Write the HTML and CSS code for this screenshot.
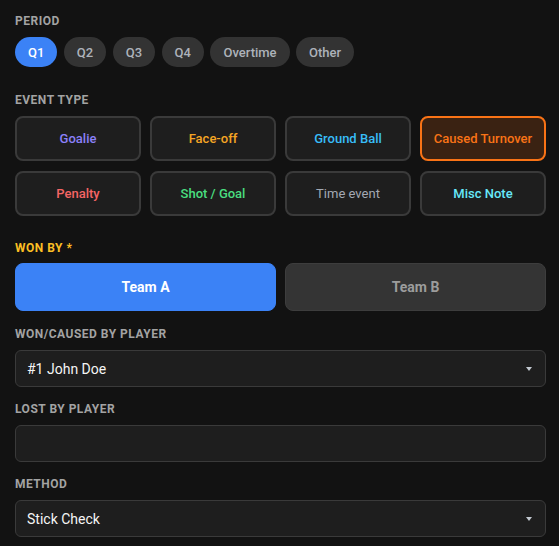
FILE: index.html
```html
<!DOCTYPE html>
<html lang="en">
<head>
  <meta charset="UTF-8">
  <meta name="viewport" content="width=device-width, initial-scale=1.0">
  <title>Log Event</title>
  <link rel="stylesheet" href="styles.css">
</head>
<body>
  <div class="form">
    <section class="field field-wide">
      <div class="label">Period</div>
      <div class="pills">
        <button class="pill active">Q1</button>
        <button class="pill">Q2</button>
        <button class="pill">Q3</button>
        <button class="pill">Q4</button>
        <button class="pill">Overtime</button>
        <button class="pill">Other</button>
      </div>
    </section>

    <section class="field field-wide events">
      <div class="label">Event Type</div>
      <div class="event-grid">
        <button class="event goalie">Goalie</button>
        <button class="event faceoff">Face-off</button>
        <button class="event groundball">Ground Ball</button>
        <button class="event turnover selected">Caused Turnover</button>
        <button class="event penalty">Penalty</button>
        <button class="event shot">Shot / Goal</button>
        <button class="event time">Time event</button>
        <button class="event misc">Misc Note</button>
      </div>
    </section>

    <section class="field winner">
      <div class="label required">Won by *</div>
      <div class="teams">
        <button class="team active">Team A</button>
        <button class="team">Team B</button>
      </div>
    </section>

    <section class="field">
      <div class="label">Won/Caused by player</div>
      <div class="select-wrap">
        <select class="input">
          <option>#1 John Doe</option>
        </select>
        <span class="caret"></span>
      </div>
    </section>

    <section class="field">
      <div class="label">Lost by player</div>
      <input class="input" type="text">
    </section>

    <section class="field">
      <div class="label">Method</div>
      <div class="select-wrap">
        <select class="input">
          <option>Stick Check</option>
        </select>
        <span class="caret"></span>
      </div>
    </section>
  </div>
</body>
</html>
```

FILE: styles.css
```css
:root {
  --bg: #121212;
  --surface: #1e1e1e;
  --border: #3a3a3a;
  --muted: #a3a3a3;
  --primary: #3b82f6;
}

* {
  box-sizing: border-box;
}

body {
  margin: 0;
  background-color: var(--bg);
  color: #f2f2f2;
  font-family: Roboto, 'Open Sans', sans-serif;
}

.form {
  padding: 13px 13px 0 15px;
}

.field {
  margin-bottom: 14px;
}

.field-wide {
  margin-bottom: 25px;
}

.field.events {
  margin-bottom: 24px;
}

.field.winner {
  margin-bottom: 15px;
}

.label {
  font-size: 12px;
  line-height: 16px;
  font-weight: 700;
  text-transform: uppercase;
  letter-spacing: 0.5px;
  color: var(--muted);
  margin-bottom: 8px;
}

.label.required {
  color: #fbbf24;
  margin-bottom: 7px;
}

button {
  font-family: inherit;
  cursor: pointer;
}

.pills {
  display: flex;
  gap: 6.5px;
  margin-top: 2px;
}

.pill {
  height: 30px;
  padding: 0 13px;
  border: none;
  border-radius: 15px;
  background-color: #333333;
  color: #adb2ba;
  font-size: 13px;
  font-weight: 500;
}

.pill.active {
  background-color: var(--primary);
  color: #ffffff;
}

.event-grid {
  display: grid;
  grid-template-columns: repeat(4, 1fr);
  gap: 10px 9px;
  margin-top: 2px;
}

.event {
  height: 45px;
  background-color: #1e1e1e;
  border: 2px solid #3a3a3a;
  border-radius: 8px;
  font-size: 13px;
  font-weight: 500;
}

.event.goalie { color: #8b80f9; }
.event.faceoff { color: #f5a524; }
.event.groundball { color: #38bdf8; }
.event.turnover { color: #f97316; }
.event.penalty { color: #f46565; }
.event.shot { color: #4ade80; }
.event.time { color: #a3a9b3; font-weight: 400; }
.event.misc { color: #67e8f9; }

.event.selected {
  border-color: #f97316;
  background-color: #3a2212;
}

.teams {
  display: grid;
  grid-template-columns: 1fr 1fr;
  gap: 9px;
}

.team {
  height: 48px;
  border: 1px solid #3d3d3d;
  border-radius: 8px;
  background-color: #343434;
  color: #9c9c9c;
  font-size: 14px;
  font-weight: 700;
}

.team.active {
  background-color: var(--primary);
  border-color: var(--primary);
  color: #ffffff;
}

.input {
  display: block;
  width: 100%;
  height: 37px;
  padding: 0 11px;
  background-color: var(--surface);
  border: 1px solid var(--border);
  border-radius: 6px;
  color: #f5f5f5;
  font-family: inherit;
  font-size: 14px;
  appearance: none;
  -webkit-appearance: none;
  outline: none;
}

.select-wrap {
  position: relative;
}

.caret {
  position: absolute;
  right: 14px;
  top: 17px;
  width: 0;
  height: 0;
  border-left: 3px solid transparent;
  border-right: 3px solid transparent;
  border-top: 4px solid #c3c9d1;
}
```
